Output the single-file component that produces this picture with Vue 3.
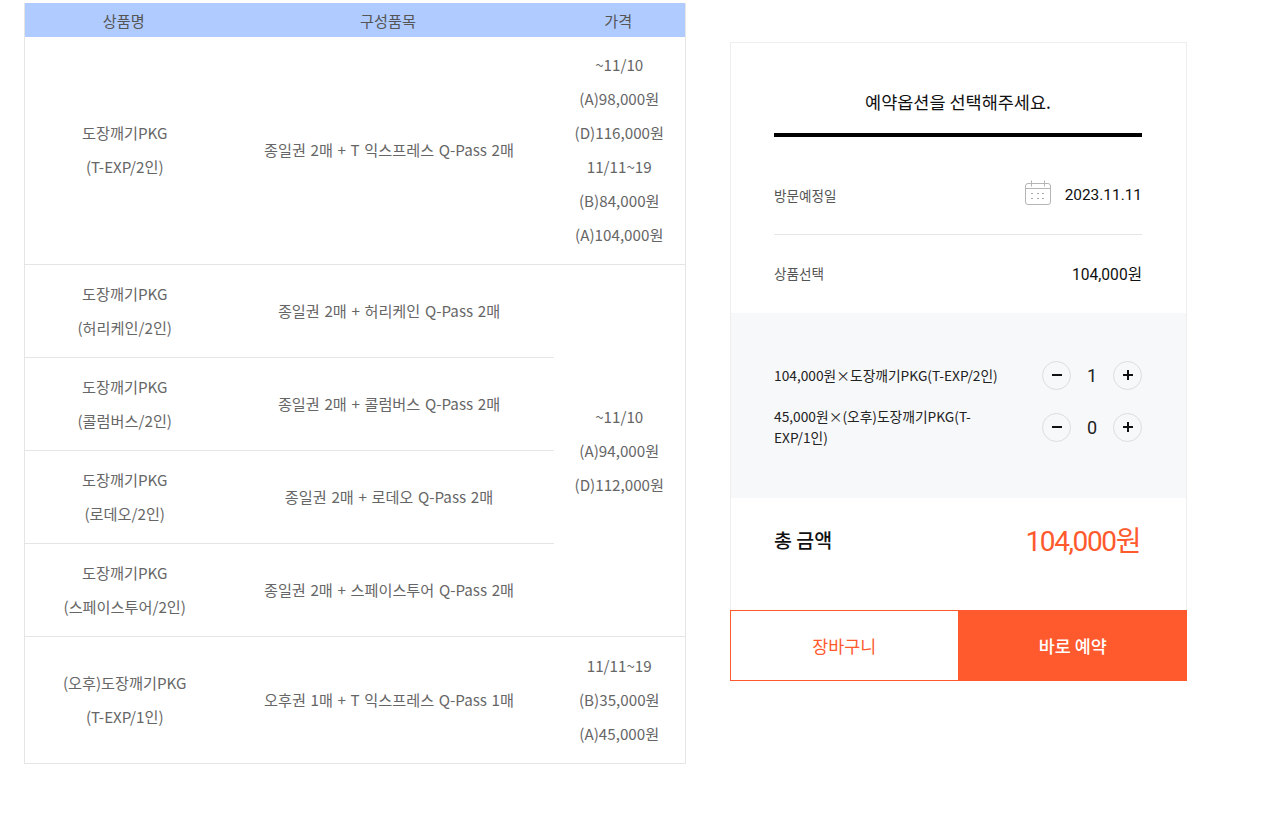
<template>
	<div class="page">
		<table class="product-table">
			<colgroup>
				<col class="col-name" />
				<col class="col-items" />
				<col class="col-price" />
			</colgroup>
			<thead>
				<tr>
					<th>상품명</th>
					<th>구성품목</th>
					<th>가격</th>
				</tr>
			</thead>
			<tbody>
				<tr>
					<td>도장깨기PKG<br />(T-EXP/2인)</td>
					<td>종일권 2매 + T 익스프레스 Q-Pass 2매</td>
					<td>~11/10<br />(A)98,000원<br />(D)116,000원<br />11/11~19<br />(B)84,000원<br />(A)104,000원</td>
				</tr>
				<tr>
					<td>도장깨기PKG<br />(허리케인/2인)</td>
					<td>종일권 2매 + 허리케인 Q-Pass 2매</td>
					<td rowspan="4">~11/10<br />(A)94,000원<br />(D)112,000원</td>
				</tr>
				<tr>
					<td>도장깨기PKG<br />(콜럼버스/2인)</td>
					<td>종일권 2매 + 콜럼버스 Q-Pass 2매</td>
				</tr>
				<tr>
					<td>도장깨기PKG<br />(로데오/2인)</td>
					<td>종일권 2매 + 로데오 Q-Pass 2매</td>
				</tr>
				<tr>
					<td>도장깨기PKG<br />(스페이스투어/2인)</td>
					<td>종일권 2매 + 스페이스투어 Q-Pass 2매</td>
				</tr>
				<tr>
					<td>(오후)도장깨기PKG<br />(T-EXP/1인)</td>
					<td>오후권 1매 + T 익스프레스 Q-Pass 1매</td>
					<td>11/11~19<br />(B)35,000원<br />(A)45,000원</td>
				</tr>
			</tbody>
		</table>

		<aside class="option-panel">
			<div class="panel-top">
				<h2 class="panel-title">예약옵션을 선택해주세요.</h2>
				<div class="info-row visit-row">
					<span class="info-label">방문예정일</span>
					<div class="date-value">
						<svg class="cal-icon" width="26" height="26" viewBox="0 0 26 26" fill="none" stroke="#b5b5b5">
							<rect x="0.5" y="3.5" width="25" height="21" rx="2.5" />
							<path d="M0.5 8.5H25.5M6.5 0.5V6.5M19.5 0.5V6.5" />
							<path d="M6 13.5h2M12 13.5h2M17 13.5h2M6 18.5h2M12 18.5h2M17 18.5h2" stroke="#aaa" />
						</svg>
						<span class="date-text">2023.11.11</span>
					</div>
				</div>
				<div class="info-row select-row">
					<span class="info-label">상품선택</span>
					<span class="selected-price">104,000원</span>
				</div>
			</div>

			<div class="qty-box">
				<div v-for="item in items" :key="item.name" class="qty-row">
					<p class="qty-name">{{ item.price }}×{{ item.name }}</p>
					<div class="qty-control">
						<button class="qty-btn">
							<svg width="10" height="10" viewBox="0 0 10 10"><path d="M0 5H10" stroke="#111" stroke-width="2" /></svg>
						</button>
						<span class="qty-num">{{ item.qty }}</span>
						<button class="qty-btn">
							<svg width="10" height="10" viewBox="0 0 10 10"><path d="M0 5H10M5 0V10" stroke="#111" stroke-width="2" /></svg>
						</button>
					</div>
				</div>
			</div>

			<div class="total-row">
				<span class="total-label">총 금액</span>
				<span class="total-price">104,000원</span>
			</div>

			<div class="action-row">
				<button class="btn-cart">장바구니</button>
				<button class="btn-book">바로 예약</button>
			</div>
		</aside>
	</div>
</template>

<script setup>
const items = [
	{ price: "104,000원", name: "도장깨기PKG(T-EXP/2인)", qty: 1 },
	{ price: "45,000원", name: "(오후)도장깨기PKG(T-EXP/1인)", qty: 0 }
]
</script>

<style scoped>
.page {
	display: flex;
	align-items: flex-start;
	gap: 44px;
	padding: 3px 0 0 24px;
	font-family: "Noto Sans CJK KR", sans-serif;
}

.product-table {
	width: 661px;
	border-collapse: collapse;
	table-layout: fixed;
	border: 1px solid #e5e5e5;
	border-top: none;
	font-size: 15.2px;
	word-spacing: 1.2px;
	color: #666;
}

.col-name {
	width: 200px;
}

.col-items {
	width: 329px;
}

.col-price {
	width: 132px;
}

.product-table th {
	height: 34px;
	padding: 0 2px 0 0;
	background: #afcbff;
	font-size: 15.2px;
	font-weight: 400;
	color: #555;
}

.product-table td {
	padding: 11px 0 13px;
	line-height: 34px;
	text-align: center;
	border-bottom: 1px solid #e5e5e5;
}

.product-table tbody tr:first-child td {
	padding-top: 10px;
}

.option-panel {
	width: 457px;
	margin-top: 39px;
	box-sizing: border-box;
	border: 1px solid #eee;
	border-bottom: none;
}

.panel-top {
	padding: 0 44px 0 43px;
}

.panel-title {
	margin: 0;
	padding: 44px 0 16px;
	line-height: 30px;
	border-bottom: 4px solid #000;
	text-align: center;
	font-size: 17.5px;
	font-weight: 400;
	color: #111;
}

.info-row {
	display: flex;
	justify-content: space-between;
	align-items: center;
}

.visit-row {
	height: 78px;
	padding-top: 19px;
	border-bottom: 1px solid #e5e5e5;
}

.select-row {
	height: 76px;
	padding-bottom: 2px;
}

.info-label {
	font-size: 13.6px;
	color: #555;
}

.date-value {
	display: flex;
	align-items: center;
	gap: 14px;
}

.cal-icon {
	display: block;
	margin-bottom: 4px;
}

.date-text {
	font-family: Roboto, sans-serif;
	font-size: 15.4px;
	color: #111;
}

.selected-price {
	font-family: Roboto, "Noto Sans CJK KR", sans-serif;
	font-size: 15.6px;
	color: #111;
}

.qty-box {
	display: flex;
	flex-direction: column;
	gap: 16px;
	height: 185px;
	box-sizing: border-box;
	padding: 47px 44px 0 43px;
	background: #f7f8fa;
}

.qty-row {
	display: flex;
	align-items: center;
	justify-content: space-between;
	min-height: 30px;
}

.qty-name {
	width: 230px;
	margin: 0;
	font-size: 13.75px;
	line-height: 21px;
	color: #222;
}

.qty-control {
	display: flex;
	align-items: center;
	justify-content: space-between;
	width: 100px;
}

.qty-btn {
	display: flex;
	align-items: center;
	justify-content: center;
	width: 29px;
	height: 29px;
	padding: 0;
	border: 1px solid #ddd;
	border-radius: 50%;
	background: transparent;
}

.qty-num {
	font-family: Roboto, sans-serif;
	font-size: 18px;
	color: #222;
}

.total-row {
	display: flex;
	align-items: center;
	justify-content: space-between;
	height: 112px;
	box-sizing: border-box;
	padding: 0 46px 30px 43px;
}

.total-label {
	font-size: 19.5px;
	font-weight: 500;
	color: #111;
}

.total-price {
	font-family: Roboto, "Noto Sans CJK KR", sans-serif;
	font-size: 28px;
	letter-spacing: -1.4px;
	color: #ff5a2e;
}

.action-row {
	display: flex;
	height: 71px;
	margin: 0 -1px;
}

.action-row button {
	flex: 1;
	font-family: "Noto Sans CJK KR", sans-serif;
	font-size: 17.4px;
	border: 1px solid #ff5a2e;
}

.btn-cart {
	background: #fff;
	color: #ff5a2e;
}

.btn-book {
	background: #ff5a2e;
	color: #fff;
	font-weight: 500;
}
</style>
